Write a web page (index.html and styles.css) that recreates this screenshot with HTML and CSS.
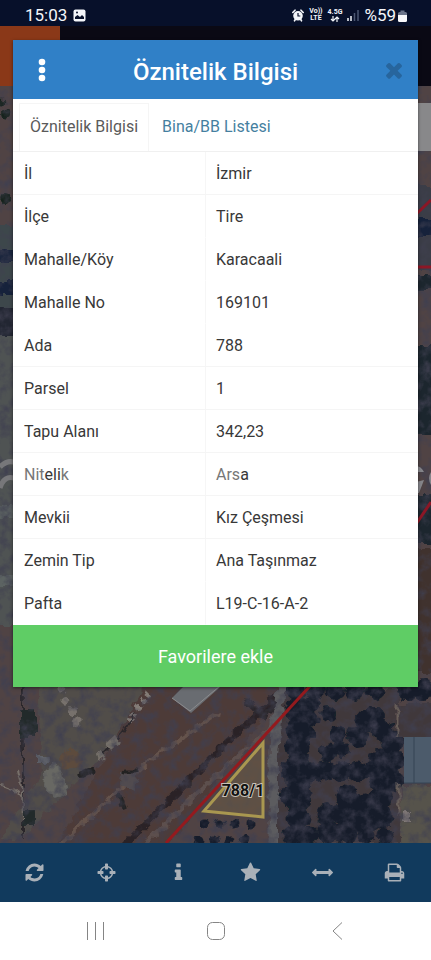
FILE: index.html
```html
<!DOCTYPE html>
<html lang="tr">
<head>
<meta charset="utf-8">
<meta name="viewport" content="width=device-width, initial-scale=1">
<title>Öznitelik Bilgisi</title>
<link rel="stylesheet" href="styles.css">
</head>
<body>
<header class="status">
  <div class="status-group">
    <span class="clock">15:03</span>
    <svg class="status-icon" width="13" height="13" viewBox="0 0 13 13" aria-hidden="true"><rect x="0.5" y="0.5" width="12" height="12" rx="2" fill="#f4f6fa"/><path d="M2 10V8l2.500-2 2.500 2 2-2 2 2v2z" fill="#07102a"/><circle cx="4" cy="3.500" r="1" fill="#07102a"/></svg>
  </div>
  <div class="status-group status-right">
    <svg width="12" height="13" viewBox="0 0 12 13" aria-hidden="true"><path d="M.8 3.500 3 1.200M11.200 3.500 9 1.200M2.500 11.800l1-1.500M9.500 11.800l-1-1.500" stroke="#f4f6fa" stroke-width="1.600" stroke-linecap="round"/><circle cx="6" cy="6.800" r="4.800" fill="#f4f6fa"/><path d="M6 4v3h2.300" fill="none" stroke="#07102a" stroke-width="1.200"/></svg>
    <span class="network"><span>Vo))</span><span>LTE</span></span>
    <span class="network"><span>4.5G</span>
      <svg width="10" height="6" viewBox="0 0 10 6" aria-hidden="true"><path d="M3 0v5M1 3l2 2 2-2M7 6V1M5 3l2-2 2 2" fill="none" stroke="#f4f6fa" stroke-width="1.200"/></svg>
    </span>
    <svg width="12" height="12" viewBox="0 0 12 12" aria-hidden="true"><path d="M1 12V9M4 12V7" stroke="#f4f6fa" stroke-width="1.500"/><path d="M7.500 12V4M11 12V1" stroke="#4b5671" stroke-width="1.500"/></svg>
    <span class="battery-level">%59</span>
    <svg width="9" height="13" viewBox="0 0 9 13" aria-hidden="true"><path d="M2.500 1.500h4v1.500h1q1.500 0 1.500 1.500V6H0V4.500Q0 3 1.500 3h1z" fill="#6a7388"/><path d="M0 6h9v5.500Q9 13 7.500 13h-6Q0 13 0 11.500z" fill="#f8f8fa"/></svg>
  </div>
</header>

<main class="stage">
  <svg class="map" viewBox="0 26 431 817" preserveAspectRatio="xMidYMax slice" role="img" aria-label="Uydu haritası">
    <defs>
      <filter id="ground" x="0" y="0" width="100%" height="100%">
        <feTurbulence type="fractalNoise" baseFrequency="0.09" numOctaves="4" seed="8"/>
        <feColorMatrix values="0 0 0 0 .05  0 0 0 0 .05  0 0 0 0 .08  2 0 0 0 -.82"/>
      </filter>
      <filter id="ragged" x="-5%" y="-5%" width="110%" height="110%">
        <feTurbulence type="fractalNoise" baseFrequency="0.12" numOctaves="2" seed="3"/>
        <feDisplacementMap in="SourceGraphic" scale="9" xChannelSelector="R" yChannelSelector="G"/>
        <feGaussianBlur stdDeviation="0.6"/>
      </filter>
    </defs>
    <rect y="26" width="431" height="817" fill="#504344"/>
    <g filter="url(#ragged)">
      <path d="M-5 225h25v85H-5z" fill="#3e464b"/>
      <path d="M-5 250h25v13H-5zM-5 281h25v14H-5z" fill="#18213b"/>
      <path d="M-5 308h25v28H-5z" fill="#202830"/>
      <path d="M-5 336h25v290H-5z" fill="#505253"/>
      <path d="M-5 505h25v12H-5zM-5 575h25v12H-5z" fill="#5c6362"/>
      <path d="M412 185h25v85h-25z" fill="#3a3e47"/>
      <path d="M412 218h25v20h-25z" fill="#17213a"/>
      <path d="M412 275h25v15h-25zM412 345h25v90h-25zM412 495h25v48h-25z" fill="#1b252e"/>
      <path d="M412 548h25v126h-25z" fill="#40302f"/>
      <path d="M-5 90q12 20 14 36M-5 190l20 16" fill="none" stroke="#17241f" stroke-width="8" stroke-dasharray="0 13" stroke-linecap="round"/>
      <path d="M90 680 148 680Q128 739 68 790L20 840H0l42-68-5-92z" fill="#514e4a"/>
      <path d="M148 680h145L165 850H54z" fill="#4d3b38"/>
      <path d="m54 850 99-92 65-45" fill="none" stroke="#65534c" stroke-width="4"/>
      <path d="m120 850 100-101 70-65" fill="none" stroke="#2a2428" stroke-width="7"/>
      <path d="m138 850 80-76 60-52" fill="none" stroke="#5d504d" stroke-width="5"/>
      <path d="M283 680q-5 35-9 67v100" fill="none" stroke="#5b5b5e" stroke-width="11"/>
      <path d="M23 684v155" fill="none" stroke="#292729" stroke-width="2"/>
      <path d="m17 770 5 20 1 30M0 785q16 2 22 12" fill="none" stroke="#77706a" stroke-width="2"/>
      <path d="M20 710h16v27H20zM23 811h12v15H23z" fill="#202c2b"/>
      <circle cx="70" cy="760" r="11" fill="#5d4c3d"/>
      <path d="M45 770q11-12 18 3l4 20-11 5-12-7z" fill="#676863"/>
      <path d="M38 755h12v9H38z" fill="#60636b"/>
      <path d="M62 688q5 20 12 25t-3 19" fill="none" stroke="#77716c" stroke-width="9" stroke-dasharray="0 13" stroke-linecap="round"/>
      <path d="m128 722 23-31" fill="none" stroke="#837b76" stroke-width="7" stroke-dasharray="4 4"/>
      <path d="m100 757 23-24 12-22" fill="none" stroke="#292729" stroke-width="2"/>
      <path d="m106 743 9-8 5 7-9 8zm-10 11 6-4 3 6-7 4z" fill="#756f69"/>
      <path d="m120 770 19 1-3 19-17-5z" fill="#514c50"/>
      <path d="m82 775 13-5M120 795l4 13M125 771h11" stroke="#242122" stroke-width="5" stroke-linecap="round"/>
      <path d="m246 700 18 18 11-16" fill="none" stroke="#29252a" stroke-width="6"/>
      <path d="M286 690h114v153H278v-90z" fill="#40373a"/>
      <g fill="none" stroke="#151f2b" stroke-linecap="round">
        <path d="M295 690h100" stroke-width="20" stroke-dasharray="0 20"/>
        <path d="M298 710v130" stroke-width="25" stroke-dasharray="0 18"/>
        <path d="M312 704 306 742M328 714h14" stroke-width="16" stroke-dasharray="0 15"/>
        <path d="M358 735l12-22 14 14-8 12" stroke-width="22" stroke-dasharray="0 16"/>
        <path d="M338 735l3 16-20 3" stroke-width="17" stroke-dasharray="0 15"/>
        <path d="M290 771h100" stroke-width="21" stroke-dasharray="0 17"/>
        <path d="M392 742v42M381 760v70" stroke-width="23" stroke-dasharray="0 19"/>
        <path d="M346 797v38M328 814v24M365 806v32" stroke-width="23" stroke-dasharray="0 17"/>
        <path d="M286 796h20M290 836h100" stroke-width="17" stroke-dasharray="0 19"/>
        <path d="M407 690h24" stroke-width="22" stroke-dasharray="0 17"/>
        <path d="M205 824h55M199 840h50" stroke-width="9" stroke-dasharray="0 15"/>
      </g>
      <path d="M400 704h35v34h-35z" fill="#40383a"/>
      <path d="M402 785h33v62h-35z" fill="#57524b"/>
      <path d="M397 704v33M399 784v30" stroke="#685e58" stroke-width="3"/>
      <path d="M403 812h7v9h-7z" fill="#8a817b"/>
    </g>
    <rect y="86" width="431" height="757" filter="url(#ground)"/>
    <path d="M404 737h27v46h-27z" fill="#4c5b6b"/>
    <path d="M414 737v46M404 783h27" stroke="#344454"/>
    <path d="M172 698 190 680h38l-37 33z" fill="#696c71"/>
    <path d="m172 698 18 13 37-31" fill="none" stroke="#8b8b8d"/>
    <rect y="26" width="431" height="60" fill="#0a0914"/>
    <rect y="26" width="60" height="60" fill="#8a3818"/>
    <rect x="410" y="103" width="21" height="48" fill="#88888a"/>
    <path d="M410 220 431 200M410 267h21M410 533l21-31" stroke="#8c1726" stroke-width="3"/>
    <path d="M0 467q8-8 16-4M0 488q4-13 14-10" stroke="#77777a" stroke-width="5" fill="none"/>
    <path d="M416 466q5 0 8 6h-8zM416 482l8-2-5 13h-3zM431 472q-4 6 0 13" fill="#85858a"/>
    <path d="M204 811 263 743V817z" fill="#6b5a45" fill-opacity=".6" stroke="#a99750" stroke-width="3"/>
    <path d="M166 843 310 686" stroke="#941a1e" stroke-width="3"/>
    <text class="parcel" x="243" y="796" text-anchor="middle">788/1</text>
  </svg>

  <section class="dialog" role="dialog" aria-labelledby="dialog-title">
    <header class="dialog-head">
      <button class="head-button" type="button" aria-label="Menü"><svg width="8" height="24" viewBox="0 0 8 24"><g fill="#fff"><circle cx="4" cy="4" r="3.300"/><circle cx="4" cy="12" r="3.300"/><circle cx="4" cy="20" r="3.300"/></g></svg></button>
      <h1 class="dialog-title" id="dialog-title">Öznitelik Bilgisi</h1>
      <button class="head-button close" type="button" aria-label="Kapat"><svg width="24" height="24" viewBox="0 0 1792 1792"><path d="M1490 1322q0 40-28 68l-136 136q-28 28-68 28t-68-28l-294-294-294 294q-28 28-68 28t-68-28l-136-136q-28-28-28-68t28-68l294-294-294-294q-28-28-28-68t28-68l136-136q28-28 68-28t68 28l294 294 294-294q28-28 68-28t68 28l136 136q28 28 28 68t-28 68l-294 294 294 294q28 28 28 68z"/></svg></button>
    </header>
    <nav class="tabs">
      <a class="tab active" href="#oznitelik" aria-current="true">Öznitelik Bilgisi</a>
      <a class="tab" href="#bina">Bina/BB Listesi</a>
    </nav>
    <table class="attributes" id="oznitelik">
      <tbody>
        <tr><th scope="row">İl</th><td>İzmir</td></tr>
        <tr class="plain"><th scope="row">İlçe</th><td>Tire</td></tr>
        <tr class="plain"><th scope="row">Mahalle/Köy</th><td>Karacaali</td></tr>
        <tr class="plain"><th scope="row">Mahalle No</th><td>169101</td></tr>
        <tr><th scope="row">Ada</th><td>788</td></tr>
        <tr><th scope="row">Parsel</th><td>1</td></tr>
        <tr><th scope="row">Tapu Alanı</th><td>342,23</td></tr>
        <tr><th scope="row"><span class="faded">Nit</span>eli<span class="faded">k</span></th><td><span class="faded">Ars</span>a</td></tr>
        <tr><th scope="row">Mevkii</th><td>Kız Çeşmesi</td></tr>
        <tr class="plain"><th scope="row">Zemin Tip</th><td>Ana Taşınmaz</td></tr>
        <tr class="plain"><th scope="row">Pafta</th><td>L19-C-16-A-2</td></tr>
      </tbody>
    </table>
    <button class="favorite" type="button">Favorilere ekle</button>
  </section>
</main>

<nav class="toolbar" aria-label="Harita araçları">
  <button type="button" aria-label="Yenile"><svg viewBox="0 0 1792 1792"><path d="M1639 1056q0 5-1 7-64 268-268 434.500t-478 166.500q-146 0-282.500-55t-243.500-157l-129 129q-19 19-45 19t-45-19-19-45v-448q0-26 19-45t45-19h448q26 0 45 19t19 45-19 45l-137 137q71 66 161 102t187 36q134 0 250-65t186-179q11-17 53-117 8-23 30-23h192q13 0 22.500 9.500t9.500 22.500zm25-800v448q0 26-19 45t-45 19h-448q-26 0-45-19t-19-45 19-45l138-138q-148-137-349-137-134 0-250 65t-186 179q-11 17-53 117-8 23-30 23h-199q-13 0-22.500-9.500t-9.500-22.500v-7q65-268 270-434.500t480-166.500q146 0 284 55.500t245 156.500l130-129q19-19 45-19t45 19 19 45z"/></svg></button>
  <button type="button" aria-label="Konum"><svg viewBox="0 0 1792 1792"><path d="M1325 1024h-109q-26 0-45-19t-19-45v-128q0-26 19-45t45-19h109q-32-108-112.500-188.500t-188.500-112.500v109q0 26-19 45t-45 19h-128q-26 0-45-19t-19-45v-109q-108 32-188.500 112.500t-112.500 188.500h109q26 0 45 19t19 45v128q0 26-19 45t-45 19h-109q32 108 112.500 188.500t188.500 112.500v-109q0-26 19-45t45-19h128q26 0 45 19t19 45v109q108-32 188.500-112.500t112.500-188.500zm339-192v128q0 26-19 45t-45 19h-143q-37 161-154.500 278.500t-278.500 154.500v143q0 26-19 45t-45 19h-128q-26 0-45-19t-19-45v-143q-161-37-278.500-154.500t-154.500-278.500h-143q-26 0-45-19t-19-45v-128q0-26 19-45t45-19h143q37-161 154.500-278.500t278.500-154.500v-143q0-26 19-45t45-19h128q26 0 45 19t19 45v143q161 37 278.500 154.500t154.500 278.500h143q26 0 45 19t19 45z"/></svg></button>
  <button type="button" aria-label="Bilgi"><svg viewBox="0 0 1792 1792"><path d="M1216 1344v128q0 26-19 45t-45 19h-512q-26 0-45-19t-19-45v-128q0-26 19-45t45-19h64v-384h-64q-26 0-45-19t-19-45v-128q0-26 19-45t45-19h384q26 0 45 19t19 45v576h64q26 0 45 19t19 45zm-128-1152v192q0 26-19 45t-45 19h-256q-26 0-45-19t-19-45v-192q0-26 19-45t45-19h256q26 0 45 19t19 45z"/></svg></button>
  <button type="button" aria-label="Favoriler"><svg viewBox="0 0 1792 1792"><path d="M1728 647q0 22-26 48l-363 354 86 500q1 7 1 20 0 21-10.500 35.500t-30.500 14.500q-19 0-40-12l-449-236-449 236q-22 12-40 12-21 0-31.500-14.500t-10.500-35.500q0-6 2-20l86-500-364-354q-25-27-25-48 0-37 56-46l502-73 225-455q19-41 49-41t49 41l225 455 502 73q56 9 56 46z"/></svg></button>
  <button type="button" aria-label="Ölçüm"><svg viewBox="0 0 1792 1792"><path d="M1792 896q0 26-19 45l-256 256q-19 19-45 19t-45-19-19-45v-128h-1024v128q0 26-19 45t-45 19-45-19l-256-256q-19-19-19-45t19-45l256-256q19-19 45-19t45 19 19 45v128h1024v-128q0-26 19-45t45-19 45 19l256 256q19 19 19 45z"/></svg></button>
  <button type="button" aria-label="Yazdır"><svg viewBox="0 0 1792 1792"><path d="M448 1536h896v-256h-896v256zm0-640h896v-384h-160q-40 0-68-28t-28-68v-160h-640v640zm1152 64q0-26-19-45t-45-19-45 19-19 45 19 45 45 19 45-19 19-45zm128 0v416q0 13-9.500 22.500t-22.500 9.500h-224v160q0 40-28 68t-68 28h-960q-40 0-68-28t-28-68v-160h-224q-13 0-22.500-9.500t-9.500-22.500v-416q0-79 56.500-135.500t135.500-56.500h64v-544q0-40 28-68t68-28h672q40 0 88 20t76 48l152 152q28 28 48 76t20 88v256h64q79 0 135.500 56.500t56.500 135.500z"/></svg></button>
</nav>

<nav class="system" aria-label="Sistem gezintisi">
  <button type="button" aria-label="Son uygulamalar"><svg width="20" height="20" viewBox="0 0 20 20"><path d="M2.500 1v18M10.500 1v18M18.500 1v18"/></svg></button>
  <button type="button" aria-label="Ana ekran"><svg width="20" height="20" viewBox="0 0 20 20"><rect x="1.500" y="1.500" width="17" height="17" rx="5"/></svg></button>
  <button type="button" aria-label="Geri"><svg width="20" height="20" viewBox="0 0 20 20"><path d="M15 1.500 6 10l9 8.500"/></svg></button>
</nav>
</body>
</html>
```
FILE: styles.css
```css
* {
  box-sizing: border-box;
}

body {
  margin: 0;
  min-height: 100vh;
  display: flex;
  flex-direction: column;
  overflow-x: hidden;
  background: #fff;
  color: #383838;
  font-family: Roboto, sans-serif;
  font-size: 16px;
}

button {
  display: flex;
  align-items: center;
  justify-content: center;
  margin: 0;
  padding: 0;
  border: 0;
  background: none;
  font: inherit;
}

/* Status bar */
.status {
  display: flex;
  align-items: center;
  justify-content: space-between;
  height: 26px;
  padding: 4px 24px 0 25px;
  background: #07102a;
  color: #f4f6fa;
}

.status-group {
  display: flex;
  align-items: center;
  gap: 6px;
}

.status-right {
  gap: 5px;
}

.clock,
.battery-level {
  font-size: 17px;
  line-height: 20px;
}

.battery-level {
  margin-right: -3px;
}

.network {
  display: flex;
  flex-direction: column;
  align-items: center;
  font-size: 7px;
  font-weight: 700;
  line-height: 7px;
}

/* Map with the dialog over it */
.stage {
  position: relative;
  flex: 1;
  padding: 14px 13px;
  overflow: hidden;
}

.map {
  position: absolute;
  inset: 0;
  width: 100%;
  height: 100%;
}

.parcel {
  fill: #111;
  stroke: #c8c1b8;
  stroke-width: 2px;
  paint-order: stroke;
  font-size: 16px;
  font-weight: 700;
}

.dialog {
  position: relative;
  background: #fff;
  box-shadow: 0 1px 3px rgba(0, 0, 0, 0.5);
}

.dialog-head {
  display: flex;
  align-items: center;
  height: 59px;
  background: #3080c7;
}

.head-button {
  flex: none;
  width: 58px;
  height: 59px;
}

.close {
  padding-left: 10px;
  fill: #27659d;
}

.dialog-title {
  flex: 1;
  margin: 0;
  padding-top: 5px;
  color: #fff;
  font-size: 24px;
  font-weight: 500;
  line-height: 28px;
  text-align: center;
}

.tabs {
  display: flex;
  height: 53px;
  padding: 4px 6px 0;
  border-bottom: 1px solid #f0f0f0;
}

.tab {
  padding: 0 12px;
  border: 1px solid transparent;
  border-bottom: 0;
  color: #457f9f;
  line-height: 46px;
  text-decoration: none;
}

.tab.active {
  padding: 0 10px;
  border-color: #f5f5f5;
  color: #5a5a5a;
}

.attributes {
  width: 100%;
  border-collapse: separate;
  border-spacing: 0;
  table-layout: fixed;
}

.attributes th,
.attributes td {
  height: 43px;
  padding: 1px 11px 0;
  border-bottom: 1px solid #f5f5f5;
  font-weight: 400;
  line-height: 24px;
  text-align: left;
}

.attributes th {
  width: 193px;
  border-right: 1px solid #f6f6f6;
}

.attributes td {
  padding-left: 10px;
}

.attributes .plain > * {
  border-bottom-color: #fff;
}

.faded {
  color: #777;
}

.favorite {
  width: 100%;
  height: 62px;
  background: #5fcd65;
  color: #fff;
  font-size: 18px;
}

/* Map tools */
.toolbar {
  display: grid;
  grid-template-columns: repeat(6, 1fr);
  height: 59px;
  margin: 0 1px 0 -2px;
  background: #113a5d;
  box-shadow: 2px 0 #113a5d;
}

.toolbar svg {
  width: 21px;
  height: 21px;
  fill: #a9b0b8;
}

/* System navigation */
.system {
  display: flex;
  justify-content: center;
  height: 58px;
  background: #fff;
}

.system button {
  width: 121px;
}

.system svg {
  fill: none;
  stroke: #858585;
  stroke-width: 1px;
}
```
